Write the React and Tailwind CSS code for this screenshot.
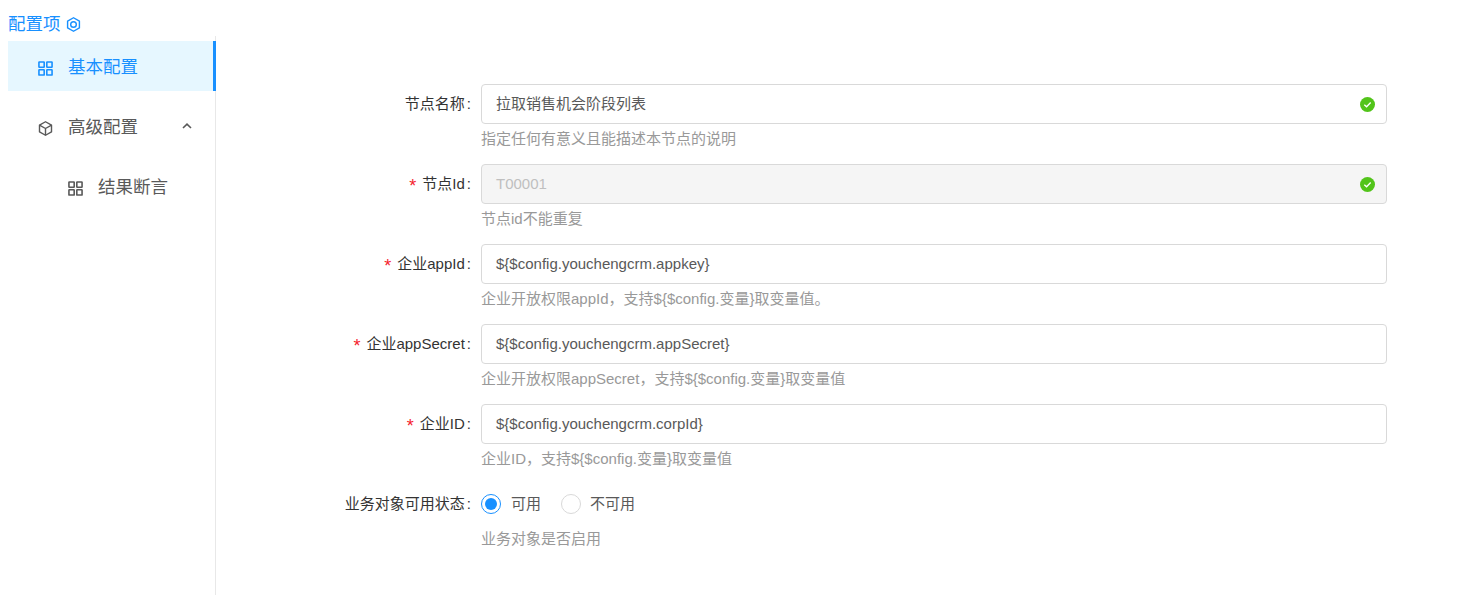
const FONT = 'font-["Liberation_Sans","Noto_Sans_CJK_SC",sans-serif]';

function GridIcon({ className }) {
  return (
    <svg viewBox="0 0 16 16" fill="none" stroke="currentColor" strokeWidth="1.7" className={className}>
      <rect x="1" y="1" width="5.6" height="5.6" rx="0.4" />
      <rect x="9.4" y="1" width="5.6" height="5.6" rx="0.4" />
      <rect x="1" y="9.4" width="5.6" height="5.6" rx="0.4" />
      <rect x="9.4" y="9.4" width="5.6" height="5.6" rx="0.4" />
    </svg>
  );
}

function CubeIcon({ className }) {
  return (
    <svg viewBox="0 0 16 16" fill="none" stroke="currentColor" strokeWidth="1.5" strokeLinejoin="round" className={className}>
      <path d="M8 .8 14.4 4.4V11.6L8 15.2 1.6 11.6V4.4Z" />
      <path d="M1.6 4.4 8 8 14.4 4.4M8 8V15.2" />
    </svg>
  );
}

function HexIcon({ className }) {
  return (
    <svg viewBox="0 0 16 16" fill="none" stroke="currentColor" strokeWidth="1.5" strokeLinejoin="round" className={className}>
      <path d="M8 .8 14.3 4.4V11.6L8 15.2 1.7 11.6V4.4Z" />
      <circle cx="8" cy="8" r="3" />
    </svg>
  );
}

function CheckBadge() {
  return (
    <svg viewBox="0 0 16 16" className="w-[15px] h-[15px] absolute right-[11px] top-[12px]">
      <circle cx="8" cy="8" r="8" fill="#52c41a" />
      <path d="M4.6 8.2 7 10.4 11.4 5.8" fill="none" stroke="#fff" strokeWidth="1.4" />
    </svg>
  );
}

function Row({ label, required, help, children }) {
  return (
    <div className="flex h-[80px]">
      <div className="w-[256px] h-[40px] flex items-center justify-end text-[15px] text-[#333] shrink-0">
        {required && <span className="text-[#f5222d] mr-[6px] text-[18px] leading-none mt-[4px]">*</span>}
        <span>{label}</span>
        <span className="ml-[2px] mr-[1px]">:</span>
      </div>
      <div className="ml-[9px] w-[906px]">
        {children}
        <div className="h-[30px] flex items-center text-[15px] text-[#999]">{help}</div>
      </div>
    </div>
  );
}

function TextInput({ value, disabled, ok }) {
  return (
    <div
      className={
        'relative h-[40px] rounded border border-[#d9d9d9] px-[14px] flex items-center text-[15px] ' +
        (disabled ? 'bg-[#f5f5f5] text-[#bfbfbf]' : 'bg-white text-[#595959]')
      }
    >
      {value}
      {ok && <CheckBadge />}
    </div>
  );
}

export default function App() {
  return (
    <div className={'flex h-[595px] bg-white overflow-hidden ' + FONT}>
      <aside className="w-[208px] ml-[8px] shrink-0">
        <div className="h-[36px] pt-[13px] flex items-center text-[#1890ff] text-[17.5px]">
          配置项
          <HexIcon className="w-[15px] h-[15px] ml-[5px]" />
        </div>
        <nav className="h-[559px] border-r border-[#e8e8e8] pt-[5px] text-[17.5px] text-[#595959]">
          <div className="relative h-[50px] mr-[-1px] pt-[3px] bg-[#e6f7ff] text-[#1890ff] flex items-center pl-[30px]">
            <GridIcon className="w-[15px] h-[15px] mr-[15px] mt-[1px]" />
            基本配置
            <span className="absolute right-0 top-0 bottom-0 w-[3px] bg-[#1890ff]" />
          </div>
          <div className="h-[60px] mt-[5px] pt-[3px] flex items-center pl-[30px]">
            <CubeIcon className="w-[15px] h-[15px] mr-[15px] mt-[1px]" />
            高级配置
            <svg viewBox="0 0 10 6" fill="none" stroke="currentColor" strokeWidth="1.6" className="w-[10px] h-[6px] ml-[44px] mb-[3px]">
              <path d="M1 5 5 1.2 9 5" />
            </svg>
          </div>
          <div className="h-[60px] pt-[3px] flex items-center pl-[60px]">
            <GridIcon className="w-[15px] h-[15px] mr-[15px] mt-[1px]" />
            结果断言
          </div>
        </nav>
      </aside>
      <main className="pt-[84px]">
        <Row label="节点名称" help="指定任何有意义且能描述本节点的说明">
          <TextInput value="拉取销售机会阶段列表" ok />
        </Row>
        <Row label="节点Id" required help="节点id不能重复">
          <TextInput value="T00001" disabled ok />
        </Row>
        <Row label="企业appId" required help={'企业开放权限appId\uFF0C支持${$config.变量}取变量值。'}>
          <TextInput value="${$config.youchengcrm.appkey}" />
        </Row>
        <Row label="企业appSecret" required help={'企业开放权限appSecret\uFF0C支持${$config.变量}取变量值'}>
          <TextInput value="${$config.youchengcrm.appSecret}" />
        </Row>
        <Row label="企业ID" required help={'企业ID\uFF0C支持${$config.变量}取变量值'}>
          <TextInput value="${$config.youchengcrm.corpId}" />
        </Row>
        <Row label="业务对象可用状态" help="业务对象是否启用">
          <div className="h-[40px] flex items-center text-[15px] text-[#595959]">
            <span className="w-[20px] h-[20px] rounded-full border border-[#1890ff] flex items-center justify-center">
              <span className="w-[12px] h-[12px] rounded-full bg-[#1890ff]" />
            </span>
            <span className="ml-[10px]">可用</span>
            <span className="w-[20px] h-[20px] rounded-full border border-[#d9d9d9] ml-[20px]" />
            <span className="ml-[9px]">不可用</span>
          </div>
        </Row>
      </main>
    </div>
  );
}
